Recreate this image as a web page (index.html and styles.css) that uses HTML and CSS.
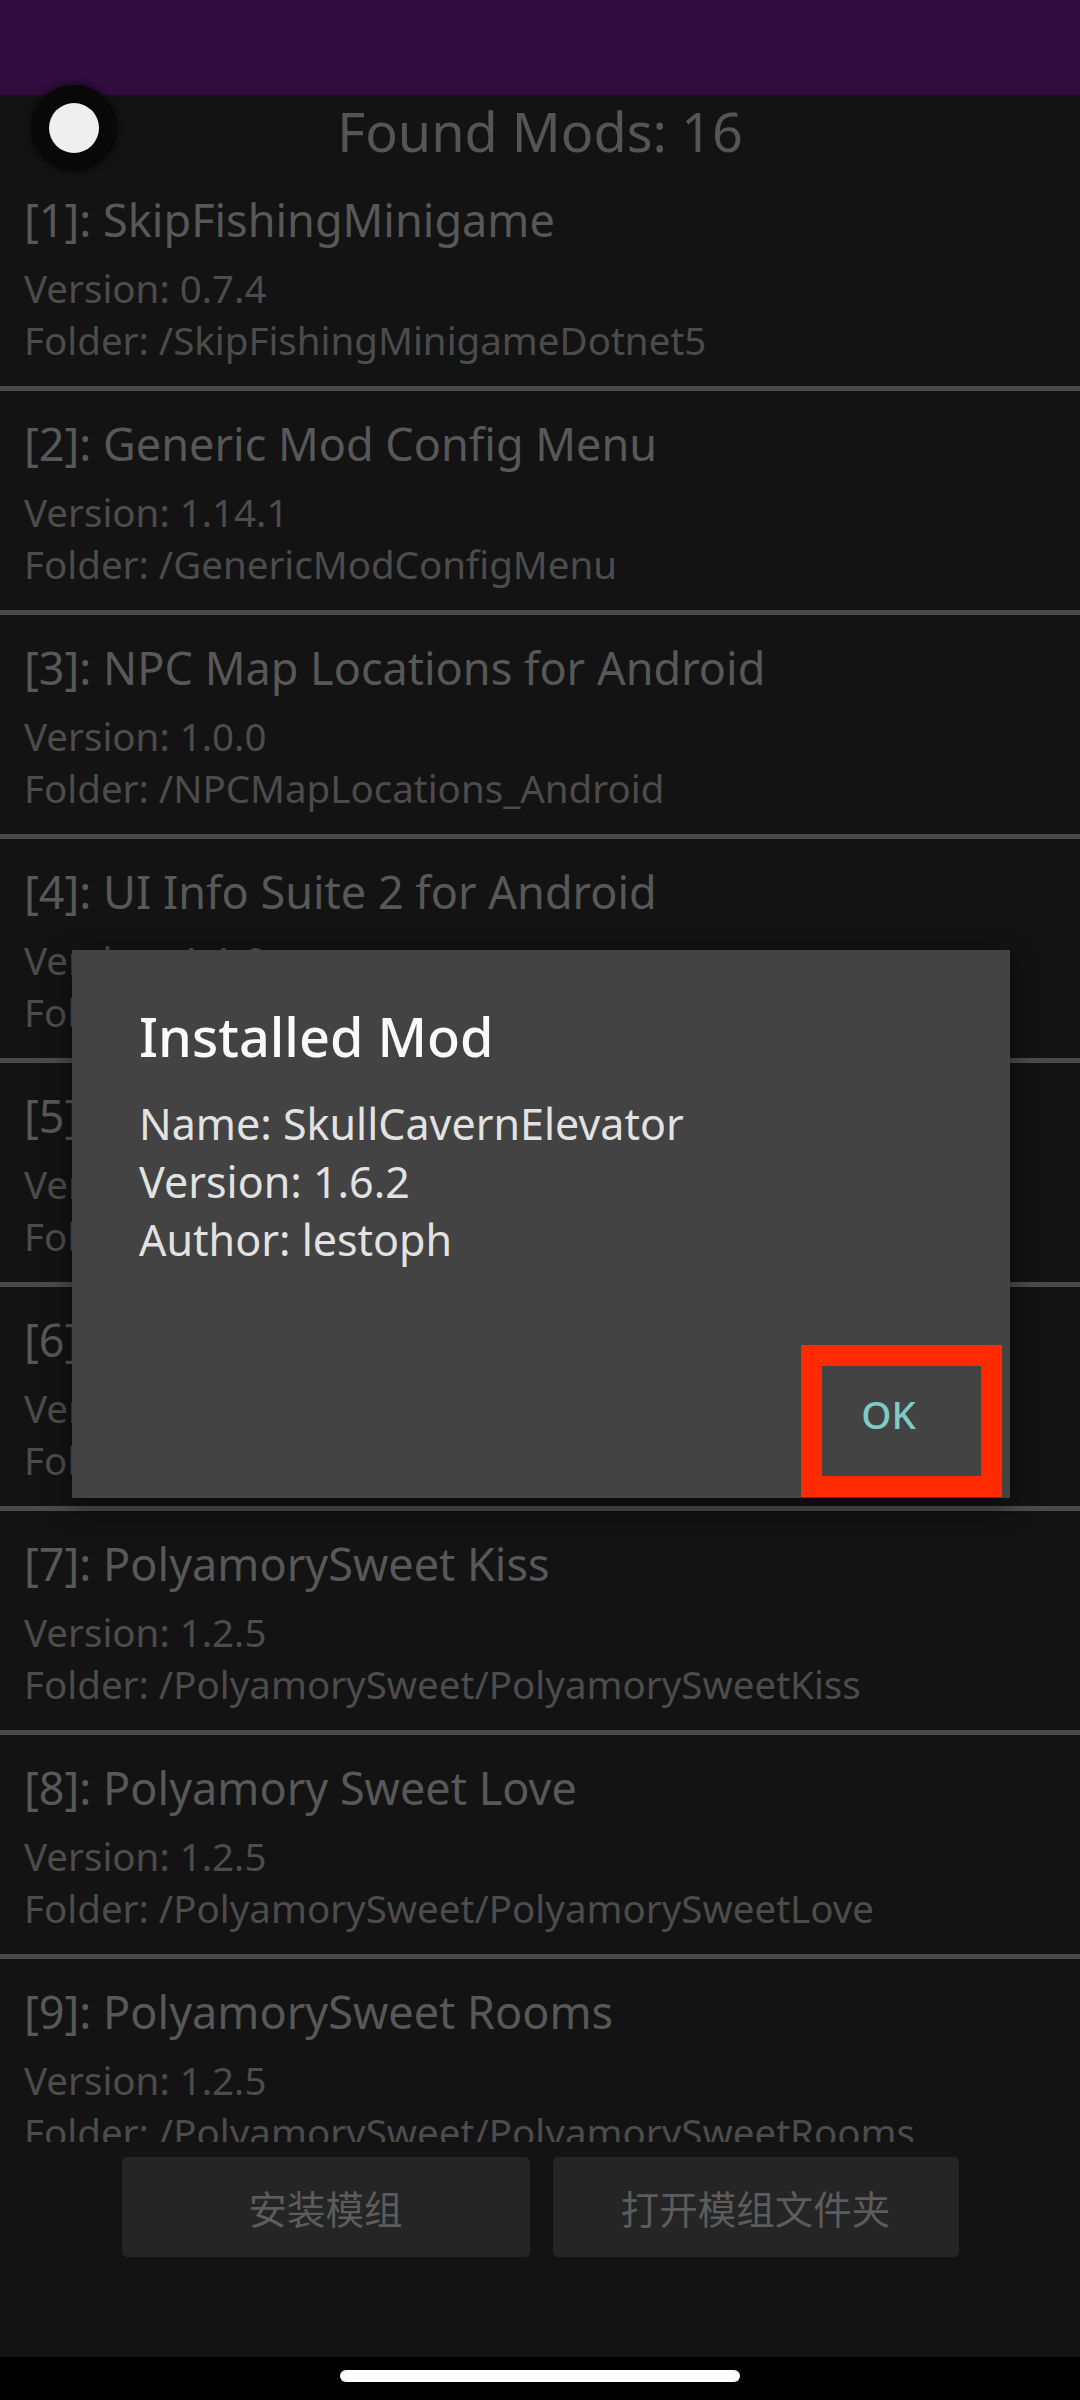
FILE: index.html
```html
<!DOCTYPE html>
<html>

<head>
    <meta charset="utf-8">
    <title>Mod Manager</title>
    <link rel="stylesheet" href="styles.css">
</head>

<body>
    <div class="status-bar"></div>

    <div class="app">
        <div class="header">Found Mods: 16</div>

        <div class="mod-list">
            <div class="mod">
                <div class="mod-title">[1]: SkipFishingMinigame</div>
                <div class="mod-info">Version: 0.7.4</div>
                <div class="mod-info">Folder: /SkipFishingMinigameDotnet5</div>
            </div>
            <div class="mod">
                <div class="mod-title">[2]: Generic Mod Config Menu</div>
                <div class="mod-info">Version: 1.14.1</div>
                <div class="mod-info">Folder: /GenericModConfigMenu</div>
            </div>
            <div class="mod">
                <div class="mod-title">[3]: NPC Map Locations for Android</div>
                <div class="mod-info">Version: 1.0.0</div>
                <div class="mod-info">Folder: /NPCMapLocations_Android</div>
            </div>
            <div class="mod">
                <div class="mod-title">[4]: UI Info Suite 2 for Android</div>
                <div class="mod-info">Version: 1.1.0</div>
                <div class="mod-info">Folder: /UIInfoSuite2</div>
            </div>
            <div class="mod">
                <div class="mod-title">[5]: PolyamorySweet</div>
                <div class="mod-info">Version: 1.2.5</div>
                <div class="mod-info">Folder: /PolyamorySweet/PolyamorySweet</div>
            </div>
            <div class="mod">
                <div class="mod-title">[6]: PolyamorySweet Bed</div>
                <div class="mod-info">Version: 1.2.5</div>
                <div class="mod-info">Folder: /PolyamorySweet/PolyamorySweetBed</div>
            </div>
            <div class="mod">
                <div class="mod-title">[7]: PolyamorySweet Kiss</div>
                <div class="mod-info">Version: 1.2.5</div>
                <div class="mod-info">Folder: /PolyamorySweet/PolyamorySweetKiss</div>
            </div>
            <div class="mod">
                <div class="mod-title">[8]: Polyamory Sweet Love</div>
                <div class="mod-info">Version: 1.2.5</div>
                <div class="mod-info">Folder: /PolyamorySweet/PolyamorySweetLove</div>
            </div>
            <div class="mod">
                <div class="mod-title">[9]: PolyamorySweet Rooms</div>
                <div class="mod-info">Version: 1.2.5</div>
                <div class="mod-info">Folder: /PolyamorySweet/PolyamorySweetRooms</div>
            </div>
        </div>

        <div class="actions">
            <div class="action-btn btn-install">安装模组</div>
            <div class="action-btn btn-folder">打开模组文件夹</div>
        </div>
    </div>

    <div class="nav-bar">
        <div class="home-indicator"></div>
    </div>

    <!-- floating assist dot -->
    <div class="float-dot">
        <div class="float-dot-inner"></div>
    </div>

    <div class="dialog">
        <div class="dialog-title">Installed Mod</div>
        <div class="dialog-body">
            <div>Name: SkullCavernElevator</div>
            <div>Version: 1.6.2</div>
            <div>Author: lestoph</div>
        </div>
        <div class="dialog-actions">
            <div class="highlight">
                <div class="ok-btn">OK</div>
            </div>
        </div>
    </div>
</body>

</html>
```

FILE: styles.css
```css
body {
    margin: 0;
    width: 1080px;
    height: 2400px;
    background-color: #131313;
    font-family: "Noto Sans", "Noto Sans CJK SC", sans-serif;
    overflow: hidden;
    position: relative;
}

.status-bar {
    height: 95px;
    background-color: #300c3f;
}

.app {
    display: flex;
    flex-direction: column;
    height: 2262px;
}

.header {
    height: 72px;
    line-height: 72px;
    text-align: center;
    font-size: 54px;
    color: #555555;
}

.mod-list {
    flex: 1;
    overflow: hidden;
}

.mod {
    padding: 23px 24px 20px;
    border-bottom: 5px solid #4b4b4b;
    white-space: nowrap;
}

.mod-title {
    font-size: 45px;
    line-height: 60px;
    color: #585858;
    margin-bottom: 12px;
}

.mod-info {
    font-size: 38.5px;
    line-height: 52px;
    color: #4c4c4c;
}

.actions {
    height: 215px;
    box-sizing: border-box;
    padding-top: 15px;
    display: flex;
    justify-content: center;
    gap: 23px;
}

.action-btn {
    height: 100px;
    background-color: #252525;
    border-radius: 5px;
    color: #5c5c5c;
    font-family: "Noto Sans CJK SC", sans-serif;
    font-size: 38.5px;
    display: flex;
    align-items: center;
    justify-content: center;
}

.btn-install {
    width: 408px;
}

.btn-folder {
    width: 406px;
}

.nav-bar {
    height: 43px;
    background-color: #000;
    display: flex;
    justify-content: center;
}

.home-indicator {
    width: 400px;
    height: 12px;
    margin-top: 13px;
    background-color: #fff;
    border-radius: 6px;
}

.float-dot {
    position: absolute;
    left: 31px;
    top: 85px;
    width: 86px;
    height: 86px;
    border-radius: 50%;
    background-color: #080808;
    box-shadow: 0 0 6px #080808;
    display: flex;
    align-items: center;
    justify-content: center;
}

.float-dot-inner {
    width: 50px;
    height: 50px;
    border-radius: 50%;
    background-color: #efefef;
}

.dialog {
    position: absolute;
    left: 72px;
    top: 950px;
    width: 938px;
    height: 548px;
    box-sizing: border-box;
    padding: 53px 0 1px 67px;
    background-color: #434343;
    box-shadow: 0 8px 24px rgba(0, 0, 0, 0.5);
    display: flex;
    flex-direction: column;
}

.dialog-title {
    font-size: 54px;
    line-height: 66px;
    font-weight: 500;
    color: #fafafa;
}

.dialog-body {
    flex: 1;
    margin-top: 26px;
    font-size: 43px;
    line-height: 58px;
    color: #e2e2e2;
}

.dialog-actions {
    display: flex;
    justify-content: flex-end;
    padding-right: 8px;
}

.highlight {
    width: 201px;
    height: 152px;
    box-sizing: border-box;
    border: 21px solid #ff2a00;
    padding: 0 26px 14px 0;
    display: flex;
    align-items: center;
    justify-content: center;
}

.ok-btn {
    color: #80cbc4;
    font-size: 38.5px;
    font-weight: 500;
}
```
